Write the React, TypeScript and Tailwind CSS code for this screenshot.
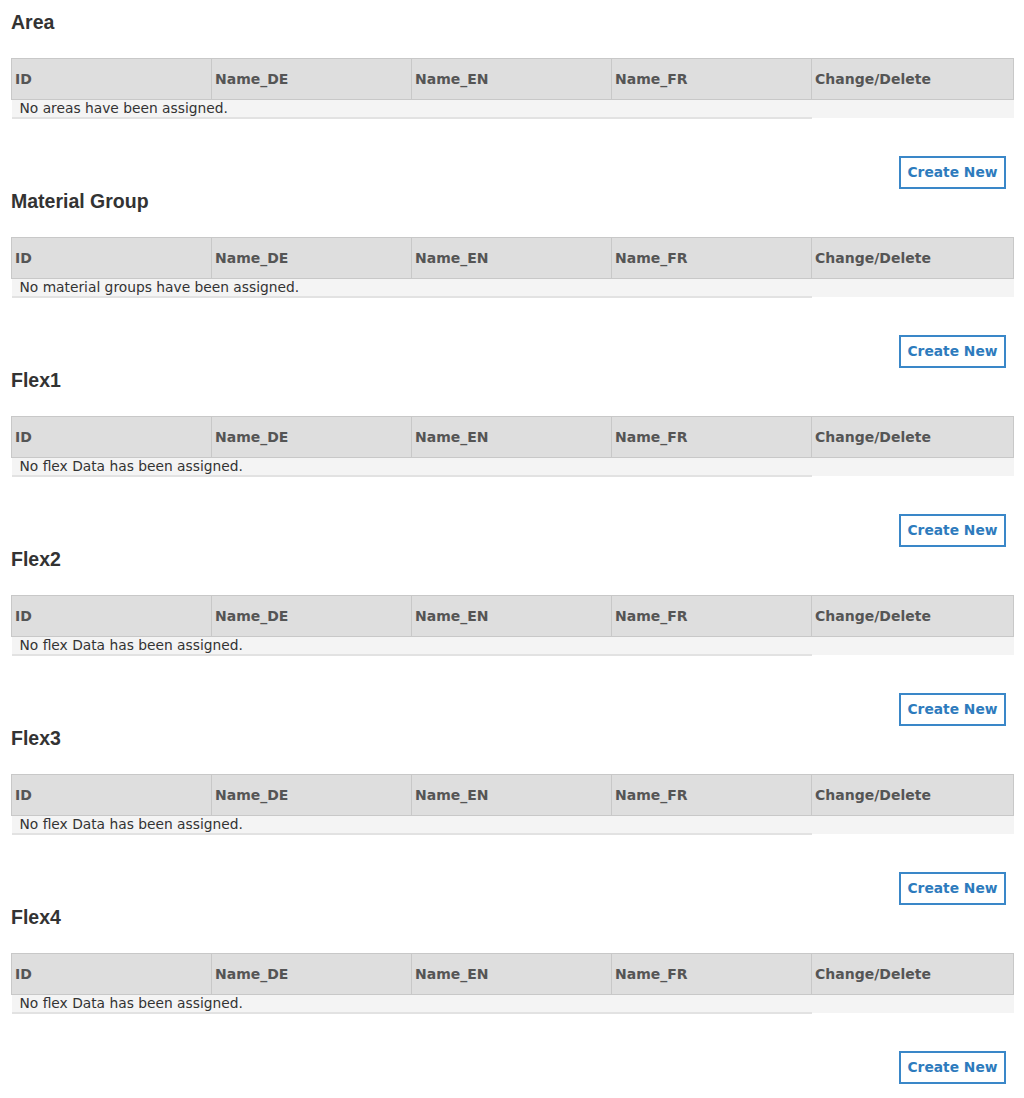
const sections = [
  { title: 'Area', empty: 'No areas have been assigned.' },
  { title: 'Material Group', empty: 'No material groups have been assigned.' },
  { title: 'Flex1', empty: 'No flex Data has been assigned.' },
  { title: 'Flex2', empty: 'No flex Data has been assigned.' },
  { title: 'Flex3', empty: 'No flex Data has been assigned.' },
  { title: 'Flex4', empty: 'No flex Data has been assigned.' },
]

const columns = ['ID', 'Name_DE', 'Name_EN', 'Name_FR', 'Change/Delete']

function Section({ title, empty }: { title: string; empty: string }) {
  return (
    <section className="h-[179px]">
      <h2 className="h-[22px] text-[19.5px] leading-[22px] font-bold text-[#333] font-['Liberation_Sans',Arial,sans-serif]">
        {title}
      </h2>

      <table className="mt-[25px] w-[1002px] border-collapse table-fixed font-['DejaVu_Sans',Verdana,sans-serif]">
        <thead>
          <tr className="h-[41px] bg-[#dedede]">
            {columns.map((c, i) => (
              <th
                key={c}
                className={`border border-[#c8c8c8] px-[3px] text-left text-[14px] font-bold text-[#555] ${i === 4 ? 'w-[202px]' : 'w-[200px]'}`}
              >
                {c}
              </th>
            ))}
          </tr>
        </thead>
        <tbody>
          <tr className="h-[18px] bg-[#f4f4f4]">
            <td colSpan={4} className="border-b-2 border-[#e2e2e2] pl-[8px] text-[13.8px] leading-[16px] text-[#333]">
              {empty}
            </td>
            <td />
          </tr>
        </tbody>
      </table>

      <div className="mt-[37px] flex justify-end pr-[18px]">
        <button className="h-[33px] w-[107px] border-2 border-[#3a87c8] bg-white text-[13.8px] font-bold text-[#2e7bbd] font-['DejaVu_Sans',Verdana,sans-serif]">
          Create New
        </button>
      </div>
    </section>
  )
}

export default function App() {
  return (
    <main className="min-h-screen bg-white pl-[11px] pt-[11px]">
      {sections.map((s) => (
        <Section key={s.title} title={s.title} empty={s.empty} />
      ))}
    </main>
  )
}
